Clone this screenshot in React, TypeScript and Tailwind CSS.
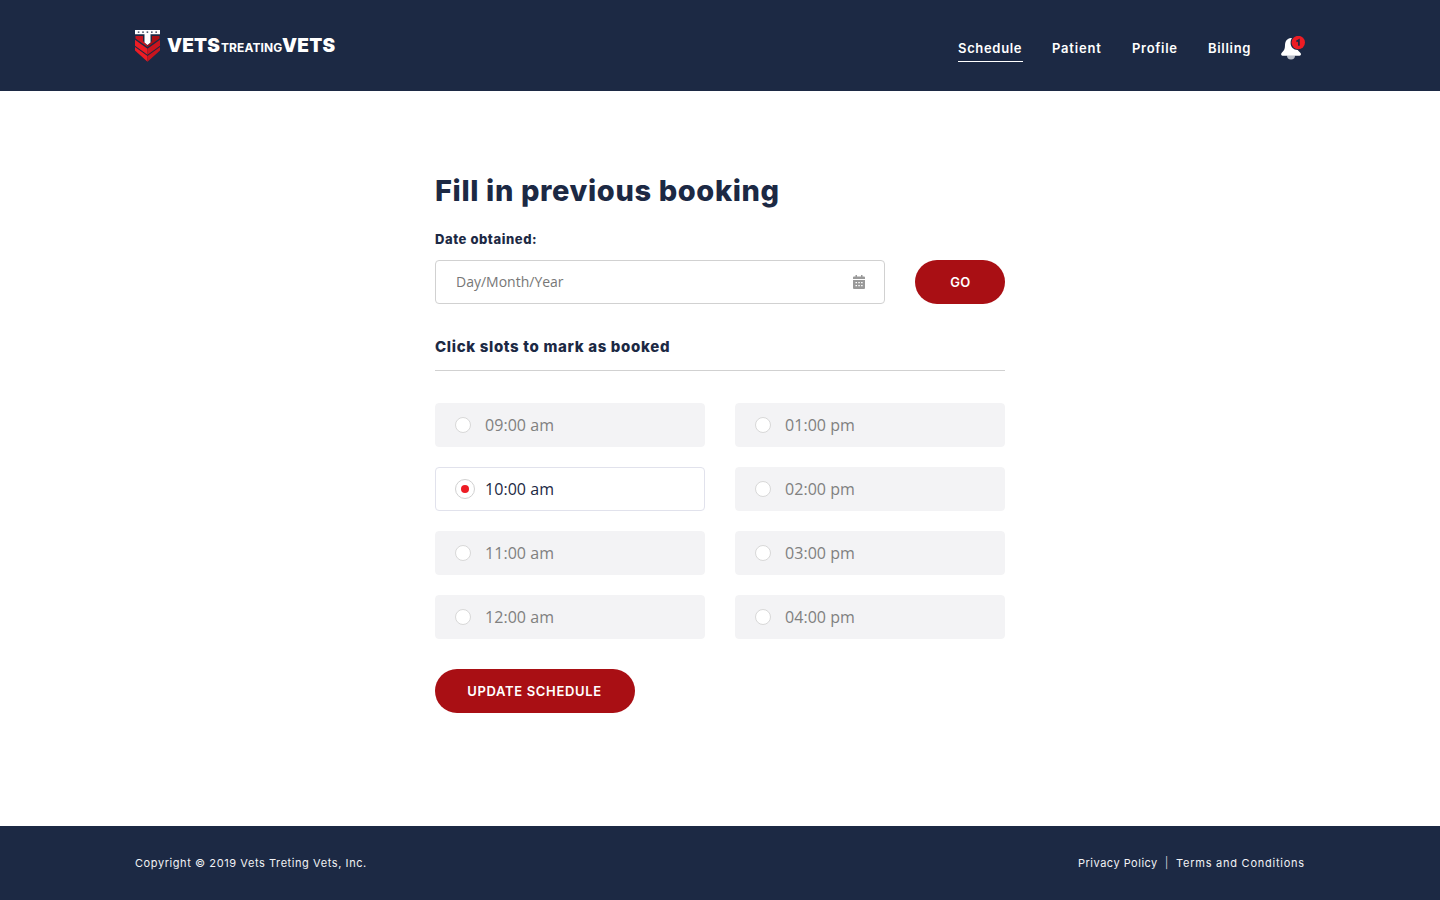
import { useState } from "react";

const NAV = [
  { label: "Schedule", active: true, box: "w-[65px] mr-[29px]", text: "tracking-[0.67px]" },
  { label: "Patient", active: false, box: "w-[50px] mr-[30px]", text: "tracking-[0.8px]" },
  { label: "Profile", active: false, box: "w-[46px] mr-[30px]", text: "tracking-[0.7px]" },
  { label: "Billing", active: false, box: "w-[43px] mr-[30px]", text: "tracking-[0.7px]" },
];

const SLOTS = [
  "09:00 am",
  "01:00 pm",
  "10:00 am",
  "02:00 pm",
  "11:00 am",
  "03:00 pm",
  "12:00 am",
  "04:00 pm",
];

function Shield() {
  return (
    <svg width="25" height="32" viewBox="0 0 25 32" className="shrink-0">
      <path d="M0.5 6H8V11L12.5 15.5V17L0.5 8.5Z" fill="#c9151e" />
      <path d="M24.5 6H17V11L12.5 15.5V17L24.5 8.5Z" fill="#a90f14" />
      <path d="M0 9.7L12.5 18.7V24.7L0 15.7Z" fill="#ed1c24" />
      <path d="M25 9.7L12.5 18.7V24.7L25 15.7Z" fill="#c9151e" />
      <path d="M0 17L12.5 26V31.7L0 20.5Z" fill="#ed1c24" />
      <path d="M25 17L12.5 26V31.7L25 20.5Z" fill="#c9151e" />
      <path d="M0 0H25V4.3H15.5V12.5L12.5 15L9.5 12.5V4.3H0Z" fill="#fff" />
      <path d="M2.8 2.2H23" stroke="#1c2944" strokeWidth="1.3" strokeDasharray="1.6 2.8" />
    </svg>
  );
}

function Bell() {
  return (
    <svg width="24" height="26" viewBox="0 0 24 26" className="mt-px shrink-0">
      <path d="M6 19.5H14A4 4 0 0 1 6 19.5Z" fill="#b8bdc7" />
      <path
        d="M10 2C6 2.4 4 5.3 4 9C4 12.5 3.4 14.2 1.2 16.3C-0.6 18 .1 19.7 1.5 19.7H18.5C20 19.7 20.8 18 18.8 16.3C17.8 15.4 17.1 14.8 16.7 14C12.5 13.8 9.6 11 9.6 7C9.6 5 10 3.5 11 2.1Z"
        fill="#fff"
      />
      <circle cx="17.3" cy="6.5" r="6.7" fill="#ed1c24" />
      <path d="M15.4 5.4L17.9 4V9.8" fill="none" stroke="#1c2944" strokeWidth="1.7" />
    </svg>
  );
}

function Calendar() {
  return (
    <svg width="12" height="14" viewBox="0 0 12 14" className="shrink-0">
      <path
        d="M2.5 0H4V1.5H8V0H9.5V1.5H11Q12 1.5 12 2.5V4H0V2.5Q0 1.5 1 1.5H2.5Z"
        fill="#999"
      />
      <path d="M0 5H12V13Q12 14 11 14H1Q0 14 0 13Z" fill="#999" />
      <path
        d="M2.5 7.7H4M5.3 7.7H6.8M8.1 7.7H9.6M2.5 10.7H4M5.3 10.7H6.8M8.1 10.7H9.6"
        stroke="#fff"
        strokeWidth="1.2"
      />
    </svg>
  );
}

export default function App() {
  const [selected, setSelected] = useState("10:00 am");

  return (
    <div className="flex h-[900px] w-full flex-col bg-white font-['Inter',sans-serif] text-[#1c2944]">
      <header className="flex h-[91px] shrink-0 items-start justify-between bg-[#1c2944] px-[135px] text-white">
        <div className="flex pt-[30px]">
          <Shield />
          <div className="ml-[7px] flex h-[30px] items-baseline whitespace-nowrap pt-px leading-[30px]">
            <span className="w-[54px] text-[19px] font-black tracking-[0.15px]">VETS</span>
            <span className="w-[61px] text-[12px] font-bold tracking-[0.1px]">TREATING</span>
            <span className="text-[19px] font-black tracking-[0.2px]">VETS</span>
          </div>
        </div>
        <nav className="flex pt-[35px]">
          {NAV.map((item) => (
            <a
              key={item.label}
              href="#"
              className={`h-[27px] whitespace-nowrap text-[13px] font-semibold leading-[26px] ${item.box} ${item.text} ${
                item.active ? "border-b border-white" : ""
              }`}
            >
              {item.label}
            </a>
          ))}
          <Bell />
        </nav>
      </header>

      <main className="flex grow flex-col items-center pt-[80px]">
        <div className="flex w-[570px] flex-col">
          <h1 className="h-[40px] whitespace-nowrap text-[29px] font-extrabold leading-[40px] tracking-[0.62px]">
            Fill in previous booking
          </h1>
          <label className="mt-[18px] h-[20px] text-[13px] font-extrabold leading-[20px] tracking-[0.57px]">
            Date obtained:
          </label>
          <div className="mt-[11px] flex justify-between">
            <div className="flex h-[44px] w-[450px] items-center justify-between rounded-[4px] border border-[#d1d1d1] pl-[20px] pr-[19px] font-['Open_Sans',sans-serif] text-[14px] text-[#777]">
              <span className="pb-[2px]">Day/Month/Year</span>
              <Calendar />
            </div>
            <button className="h-[44px] w-[90px] rounded-full bg-[#a90f14] pl-[1px] pt-[2px] text-[13px] font-semibold tracking-[0.4px] text-white">
              GO
            </button>
          </div>
          <h2 className="mt-[31px] h-[36px] border-b border-[#d1d1d1] text-[15px] font-extrabold leading-[24px] tracking-[0.66px]">
            Click slots to mark as booked
          </h2>
          <div className="mt-[32px] grid grid-cols-2 gap-x-[30px] gap-y-[20px]">
            {SLOTS.map((slot) => {
              const on = slot === selected;
              return (
                <button
                  key={slot}
                  onClick={() => setSelected(slot)}
                  className={`flex h-[44px] items-center rounded-[4px] border pl-[19px] font-['Open_Sans',sans-serif] text-[16px] tracking-[0.05px] ${
                    on
                      ? "border-[#e1e2ec] bg-white text-[#1c2944]"
                      : "border-[#f3f3f5] bg-[#f3f3f5] text-[#808080]"
                  }`}
                >
                  <span className="flex w-[30px]">
                    {on ? (
                      <span className="flex size-[20px] items-center justify-center rounded-full border border-[#d1d1d1] bg-white">
                        <span className="size-[8px] rounded-full bg-[#ed1c24]" />
                      </span>
                    ) : (
                      <span className="size-[16px] rounded-full border border-[#d8d8d8] bg-white" />
                    )}
                  </span>
                  {slot}
                </button>
              );
            })}
          </div>
          <button className="mt-[30px] h-[44px] w-[200px] whitespace-nowrap rounded-full bg-[#a90f14] pr-[1px] pt-[2px] text-[13px] font-semibold tracking-[0.67px] text-white">
            UPDATE SCHEDULE
          </button>
        </div>
      </main>

      <footer className="flex h-[74px] shrink-0 justify-between bg-[#1c2944] px-[135px] pt-[27px] text-[11px] leading-[20px] text-[#f1f2f4]">
        <span className="tracking-[0.58px]">Copyright © 2019 Vets Treting Vets, Inc.</span>
        <div className="flex">
          <a href="#" className="w-[79px] whitespace-nowrap tracking-[0.5px]">Privacy Policy</a>
          <span className="w-[19px] text-center text-[#c4c8d0]">|</span>
          <a href="#" className="w-[129px] whitespace-nowrap tracking-[0.76px]">Terms and Conditions</a>
        </div>
      </footer>
    </div>
  );
}
